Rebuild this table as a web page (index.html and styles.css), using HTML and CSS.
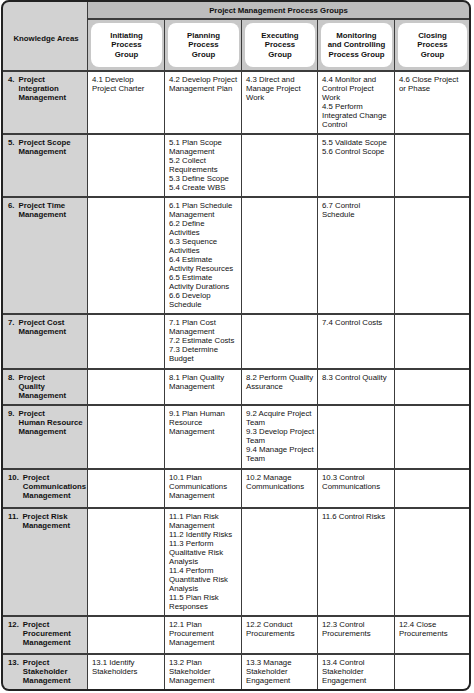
FILE: index.html
```html
<!DOCTYPE html>
<html lang="en">
<head>
<meta charset="utf-8">
<title>Project Management Process Groups</title>
<link rel="stylesheet" href="styles.css">
</head>
<body>
<div class="chart">
  <div class="ka-head">Knowledge Areas</div>
  <div class="band">Project Management Process Groups</div>
  <div class="sub"><div class="pill">Initiating<br>Process<br>Group</div></div>
  <div class="sub"><div class="pill">Planning<br>Process<br>Group</div></div>
  <div class="sub"><div class="pill">Executing<br>Process<br>Group</div></div>
  <div class="sub"><div class="pill">Monitoring<br>and Controlling<br>Process Group</div></div>
  <div class="sub"><div class="pill">Closing<br>Process<br>Group</div></div>

  <div class="ka"><span class="num">4.</span><span class="name">Project<br>Integration<br>Management</span></div>
  <div class="cell"><p>4.1 Develop<br>Project Charter</p></div>
  <div class="cell"><p>4.2 Develop Project<br>Management Plan</p></div>
  <div class="cell"><p>4.3 Direct and<br>Manage Project<br>Work</p></div>
  <div class="cell"><p>4.4 Monitor and<br>Control Project<br>Work</p><p>4.5 Perform<br>Integrated Change<br>Control</p></div>
  <div class="cell"><p>4.6 Close Project<br>or Phase</p></div>

  <div class="ka"><span class="num">5.</span><span class="name">Project Scope<br>Management</span></div>
  <div class="cell"></div>
  <div class="cell"><p>5.1 Plan Scope<br>Management</p><p>5.2 Collect<br>Requirements</p><p>5.3 Define Scope</p><p>5.4 Create WBS</p></div>
  <div class="cell"></div>
  <div class="cell"><p>5.5 Validate Scope</p><p>5.6 Control Scope</p></div>
  <div class="cell"></div>

  <div class="ka"><span class="num">6.</span><span class="name">Project Time<br>Management</span></div>
  <div class="cell"></div>
  <div class="cell"><p>6.1 Plan Schedule<br>Management</p><p>6.2 Define<br>Activities</p><p>6.3 Sequence<br>Activities</p><p>6.4 Estimate<br>Activity Resources</p><p>6.5 Estimate<br>Activity Durations</p><p>6.6 Develop<br>Schedule</p></div>
  <div class="cell"></div>
  <div class="cell"><p>6.7 Control<br>Schedule</p></div>
  <div class="cell"></div>

  <div class="ka"><span class="num">7.</span><span class="name">Project Cost<br>Management</span></div>
  <div class="cell"></div>
  <div class="cell"><p>7.1 Plan Cost<br>Management</p><p>7.2 Estimate Costs</p><p>7.3 Determine<br>Budget</p></div>
  <div class="cell"></div>
  <div class="cell"><p>7.4 Control Costs</p></div>
  <div class="cell"></div>

  <div class="ka"><span class="num">8.</span><span class="name">Project<br>Quality<br>Management</span></div>
  <div class="cell"></div>
  <div class="cell"><p>8.1 Plan Quality<br>Management</p></div>
  <div class="cell"><p>8.2 Perform Quality<br>Assurance</p></div>
  <div class="cell"><p>8.3 Control Quality</p></div>
  <div class="cell"></div>

  <div class="ka"><span class="num">9.</span><span class="name">Project<br>Human Resource<br>Management</span></div>
  <div class="cell"></div>
  <div class="cell"><p>9.1 Plan Human<br>Resource<br>Management</p></div>
  <div class="cell"><p>9.2 Acquire Project<br>Team</p><p>9.3 Develop Project<br>Team</p><p>9.4 Manage Project<br>Team</p></div>
  <div class="cell"></div>
  <div class="cell"></div>

  <div class="ka"><span class="num">10.</span><span class="name">Project<br>Communications<br>Management</span></div>
  <div class="cell"></div>
  <div class="cell"><p>10.1 Plan<br>Communications<br>Management</p></div>
  <div class="cell"><p>10.2 Manage<br>Communications</p></div>
  <div class="cell"><p>10.3 Control<br>Communications</p></div>
  <div class="cell"></div>

  <div class="ka"><span class="num">11.</span><span class="name">Project Risk<br>Management</span></div>
  <div class="cell"></div>
  <div class="cell"><p>11.1 Plan Risk<br>Management</p><p>11.2 Identify Risks</p><p>11.3 Perform<br>Qualitative Risk<br>Analysis</p><p>11.4 Perform<br>Quantitative Risk<br>Analysis</p><p>11.5 Plan Risk<br>Responses</p></div>
  <div class="cell"></div>
  <div class="cell"><p>11.6 Control Risks</p></div>
  <div class="cell"></div>

  <div class="ka"><span class="num">12.</span><span class="name">Project<br>Procurement<br>Management</span></div>
  <div class="cell"></div>
  <div class="cell"><p>12.1 Plan<br>Procurement<br>Management</p></div>
  <div class="cell"><p>12.2 Conduct<br>Procurements</p></div>
  <div class="cell"><p>12.3 Control<br>Procurements</p></div>
  <div class="cell"><p>12.4 Close<br>Procurements</p></div>

  <div class="ka"><span class="num">13.</span><span class="name">Project<br>Stakeholder<br>Management</span></div>
  <div class="cell"><p>13.1 Identify<br>Stakeholders</p></div>
  <div class="cell"><p>13.2 Plan<br>Stakeholder<br>Management</p></div>
  <div class="cell"><p>13.3 Manage<br>Stakeholder<br>Engagement</p></div>
  <div class="cell"><p>13.4 Control<br>Stakeholder<br>Engagement</p></div>
  <div class="cell"></div>
</div>
</body>
</html>
```
FILE: styles.css
```css
html, body {
  margin: 0;
  padding: 0;
  background: #ffffff;
}

body {
  font-family: "Liberation Sans", Arial, sans-serif;
  color: #111111;
  font-size: 7.8px;
  line-height: 9px;
}

.chart {
  margin-left: 1px;
  width: 470px;
  box-sizing: border-box;
  border: 2px solid #222222;
  border-radius: 8px;
  overflow: hidden;
  background: #3c3c3c;
  display: grid;
  grid-template-columns: 84px 76px 76px 75px 76px 74px;
  grid-template-rows: 16px 50px 61px 61px 115px 53px 34px 62px 37px 106px 36px 34px;
  column-gap: 1px;
  row-gap: 2px;
}

.ka-head {
  grid-row: 1 / span 2;
  grid-column: 1;
  background: #d2d2d2;
  font-weight: bold;
  display: flex;
  align-items: center;
  justify-content: center;
  padding-top: 5px;
  padding-left: 2px;
  box-sizing: border-box;
}

.band {
  grid-row: 1;
  grid-column: 2 / span 5;
  background: #bdbdbd;
  font-weight: bold;
  display: flex;
  align-items: center;
  justify-content: center;
}

.sub {
  background: #c8c8c8;
  padding: 3px 2px 3px 3px;
  box-sizing: border-box;
  display: flex;
}

.pill {
  flex: 1;
  background: #ffffff;
  border-radius: 8px;
  font-weight: bold;
  line-height: 9.3px;
  text-align: center;
  display: flex;
  align-items: center;
  justify-content: center;
  white-space: nowrap;
}

.ka {
  background: #d3d3d3;
  font-weight: bold;
  display: flex;
  padding: 3px 0 0 5px;
  white-space: nowrap;
}

.num {
  margin-right: 4px;
}

.cell {
  background: #ffffff;
  padding: 3px 0 0 4px;
  white-space: nowrap;
}

.cell p {
  margin: 0;
}
```
